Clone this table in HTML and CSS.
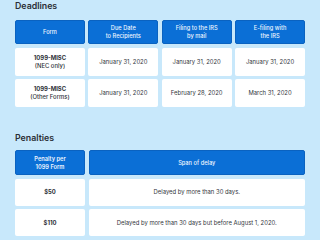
FILE: index.html
```html
<!DOCTYPE html>
<html lang="en">
<head>
  <meta charset="UTF-8">
  <title>1099-MISC Deadlines and Penalties</title>
  <link rel="stylesheet" href="styles.css">
</head>
<body>

  <section class="block">
    <h2 class="block-title">Deadlines</h2>
    <div class="table deadlines">
      <div class="cell head"><span>Form</span></div>
      <div class="cell head"><span>Due Date<br>to Recipients</span></div>
      <div class="cell head"><span>Filing to the IRS<br>by mail</span></div>
      <div class="cell head"><span>E-filing with<br>the IRS</span></div>

      <div class="cell name"><span><b>1099-MISC</b><br>(NEC only)</span></div>
      <div class="cell"><span>January 31, 2020</span></div>
      <div class="cell"><span>January 31, 2020</span></div>
      <div class="cell"><span>January 31, 2020</span></div>

      <div class="cell name"><span><b>1099-MISC</b><br>(Other Forms)</span></div>
      <div class="cell"><span>January 31, 2020</span></div>
      <div class="cell"><span>February 28, 2020</span></div>
      <div class="cell"><span>March 31, 2020</span></div>
    </div>
  </section>

  <section class="block penalties-block">
    <h2 class="block-title">Penalties</h2>
    <div class="table penalties">
      <div class="cell head strong"><span>Penalty per<br>1099 Form</span></div>
      <div class="cell head"><span>Span of delay</span></div>

      <div class="cell name"><span><b>$50</b></span></div>
      <div class="cell"><span>Delayed by more than 30 days.</span></div>

      <div class="cell name"><span><b>$110</b></span></div>
      <div class="cell"><span>Delayed by more than 30 days but before August 1, 2020.</span></div>
    </div>
  </section>

</body>
</html>
```

FILE: styles.css
```css
* { margin: 0; padding: 0; box-sizing: border-box; }
html, body {
  width: 100%;
  height: 100%;
  overflow: hidden;
  background-color: #c8e8fb;
  font-family: Inter, "Liberation Sans", Arial, sans-serif;
  color: #2e3138;
}
body {
  padding: 0 15px;
}
.block-title {
  font-size: 8.8px;
  font-weight: 600;
  line-height: 12px;
  color: #2b2f36;
  height: 20px;
}
.penalties-block {
  margin-top: 20px;
}
.penalties-block .block-title {
  height: 23px;
  padding-top: 5px;
}
.table {
  display: grid;
  gap: 3.5px;
}
.deadlines {
  grid-template-columns: repeat(4, 1fr);
  grid-template-rows: 24px 28px 28px;
}
.penalties {
  grid-template-columns: 70px 1fr;
  grid-template-rows: 25px 27px 27px;
}
.cell {
  display: flex;
  align-items: center;
  justify-content: center;
  text-align: center;
  background-color: #ffffff;
  border-radius: 2px;
  font-size: 5.9px;
  line-height: 7.6px;
  color: #33363c;
}
.cell.head {
  background-color: #0b6fd6;
  border: 1px solid #0a62c0;
  color: #eef6ff;
  font-size: 5.7px;
  font-weight: 500;
}
.cell.head.strong {
  font-weight: 600;
}
.cell.name {
  color: #2e3138;
  font-weight: 500;
}
.cell.name b {
  font-weight: 700;
}
```
